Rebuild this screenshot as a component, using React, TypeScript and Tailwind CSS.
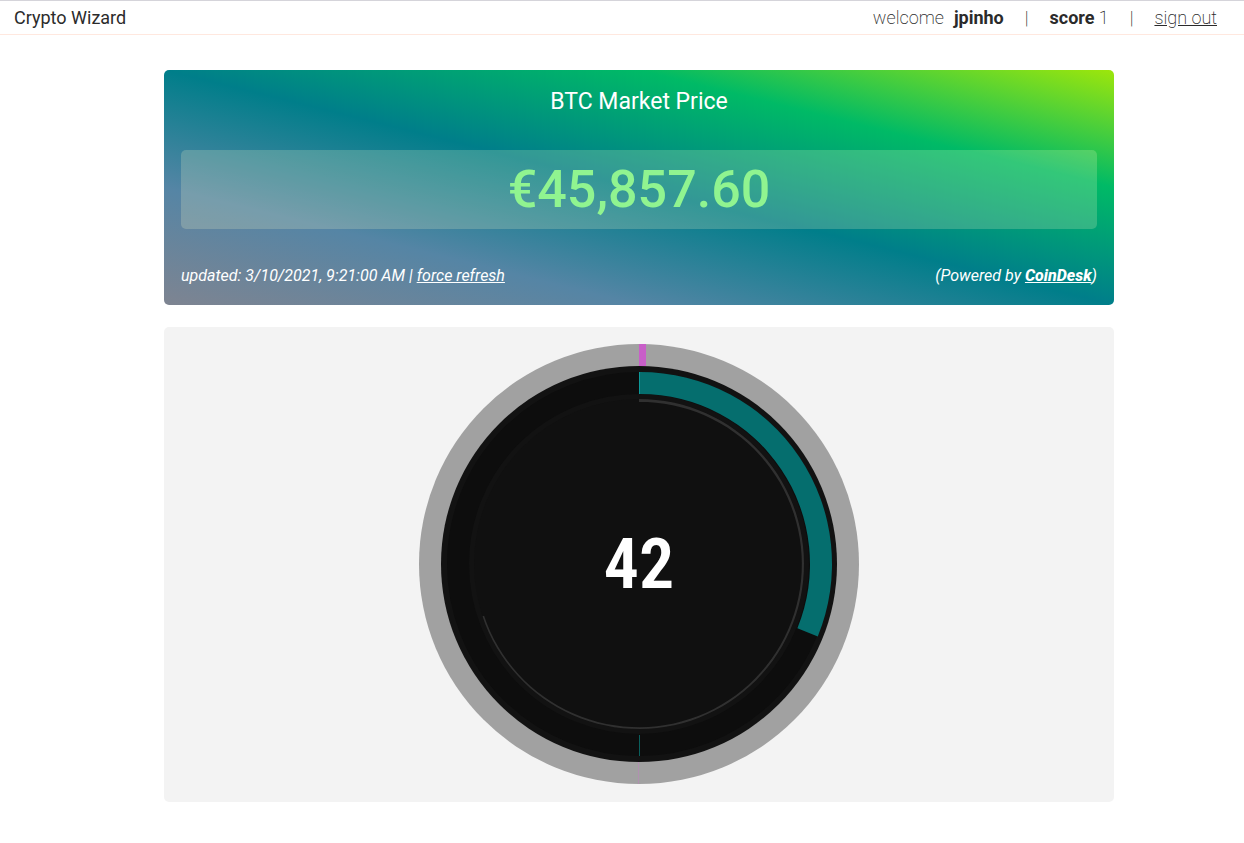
const CENTER = 220;

function point(radius: number, degrees: number) {
  const radians = (degrees * Math.PI) / 180;
  const x = CENTER + radius * Math.sin(radians);
  const y = CENTER - radius * Math.cos(radians);
  return `${x.toFixed(2)} ${y.toFixed(2)}`;
}

function band(outer: number, inner: number, end: number) {
  const large = end > 180 ? 1 : 0;
  return [
    `M${point(outer, 0)}`,
    `A${outer} ${outer} 0 ${large} 1 ${point(outer, end)}`,
    `L${point(inner, end)}`,
    `A${inner} ${inner} 0 ${large} 0 ${point(inner, 0)}Z`,
  ].join(" ");
}

// A fine line that gets thinner as it goes round.
function taper(outer: number, from: number, to: number, end: number) {
  const steps = 84;
  const outside: string[] = [];
  const inside: string[] = [];
  for (let i = 0; i <= steps; i++) {
    const t = i / steps;
    const width = from + (to - from) * Math.sqrt(t);
    outside.push(point(outer, end * t));
    inside.unshift(point(outer - width, end * t));
  }
  return `M${outside.concat(inside).join("L")}Z`;
}

function Dial({ value }: { value: number }) {
  return (
    <div className="grid place-items-center">
      <svg
        viewBox="0 0 440 440"
        className="col-start-1 row-start-1 w-full max-w-[440px]"
        aria-hidden="true"
      >
        <circle cx="220" cy="220" r="220" fill="#a1a1a1" />
        <rect x="219" y="418" width="1" height="22" fill="#b090b0" />
        <path d="M220 0h7v22.2h-7z" fill="#c85fc8" />
        <circle cx="220" cy="220" r="198" fill="#121212" />
        <circle cx="220" cy="220" r="181" fill="none" stroke="#0d0d0d" strokeWidth="22" />
        <path d={band(192, 170, 112.2)} fill="#056e6e" transform="translate(1 0)" />
        <rect x="220" y="28" width="1" height="22" fill="#0d9898" />
        <rect x="220" y="391" width="1" height="21" fill="#0a5f5d" />
        <circle cx="220" cy="220" r="165" fill="#101010" />
        <path d={taper(165, 3, 1.6, 251.5)} fill="#303030" />
      </svg>
      <output className="col-start-1 row-start-1 font-['Roboto_Condensed','Liberation_Sans_Narrow','DejaVu_Sans_Condensed',sans-serif] text-[70px] leading-none font-semibold text-white">
        {value}
      </output>
    </div>
  );
}

export default function App() {
  return (
    <div className="min-h-screen bg-white font-[Roboto,sans-serif] text-[#2b2b2b]">
      <header className="flex h-[35px] items-center justify-between border-t border-b border-t-[#d5d4da] border-b-[#ffe8df] pr-[27px] pl-[14px] text-lg">
        <h1 className="font-normal">Crypto Wizard</h1>
        <nav className="flex items-center font-extralight">
          <span>welcome</span>
          <strong className="ml-[10px] font-bold">jpinho</strong>
          <span className="mx-[21px]">|</span>
          <span>
            <strong className="font-bold">score</strong> 1
          </span>
          <span className="mx-[21px]">|</span>
          <a href="#sign-out" className="underline">
            sign out
          </a>
        </nav>
      </header>
      <main className="mx-auto flex max-w-[984px] flex-col gap-[22px] pt-[35px] pb-10 pl-[34px]">
        <section className="rounded-[5px] bg-[linear-gradient(to_top_right,#7e8491,#5585a5,#007e8a,#00ba66,#9de60b)] px-[17px] pt-[17px] pb-[17px] text-white">
          <h2 className="text-center text-[23px] leading-[30px]">BTC Market Price</h2>
          <p className="mt-[33px] rounded-[5px] bg-[#ffffc8]/20 text-center text-[52px] leading-[79px] font-medium text-[#90f490]">
            €45,857.60
          </p>
          <footer className="mt-[34px] flex flex-wrap justify-between text-base leading-[25px] italic">
            <p>
              updated: 3/10/2021, 9:21:00 AM |{" "}
              <button type="button" className="italic underline">
                force refresh
              </button>
            </p>
            <p>
              (Powered by{" "}
              <a href="#coindesk" className="font-extrabold underline">
                CoinDesk
              </a>
              )
            </p>
          </footer>
        </section>
        <section className="rounded-[5px] bg-[#f3f3f3] px-[17px] pt-[17px] pb-[18px]">
          <Dial value={42} />
        </section>
      </main>
    </div>
  );
}
